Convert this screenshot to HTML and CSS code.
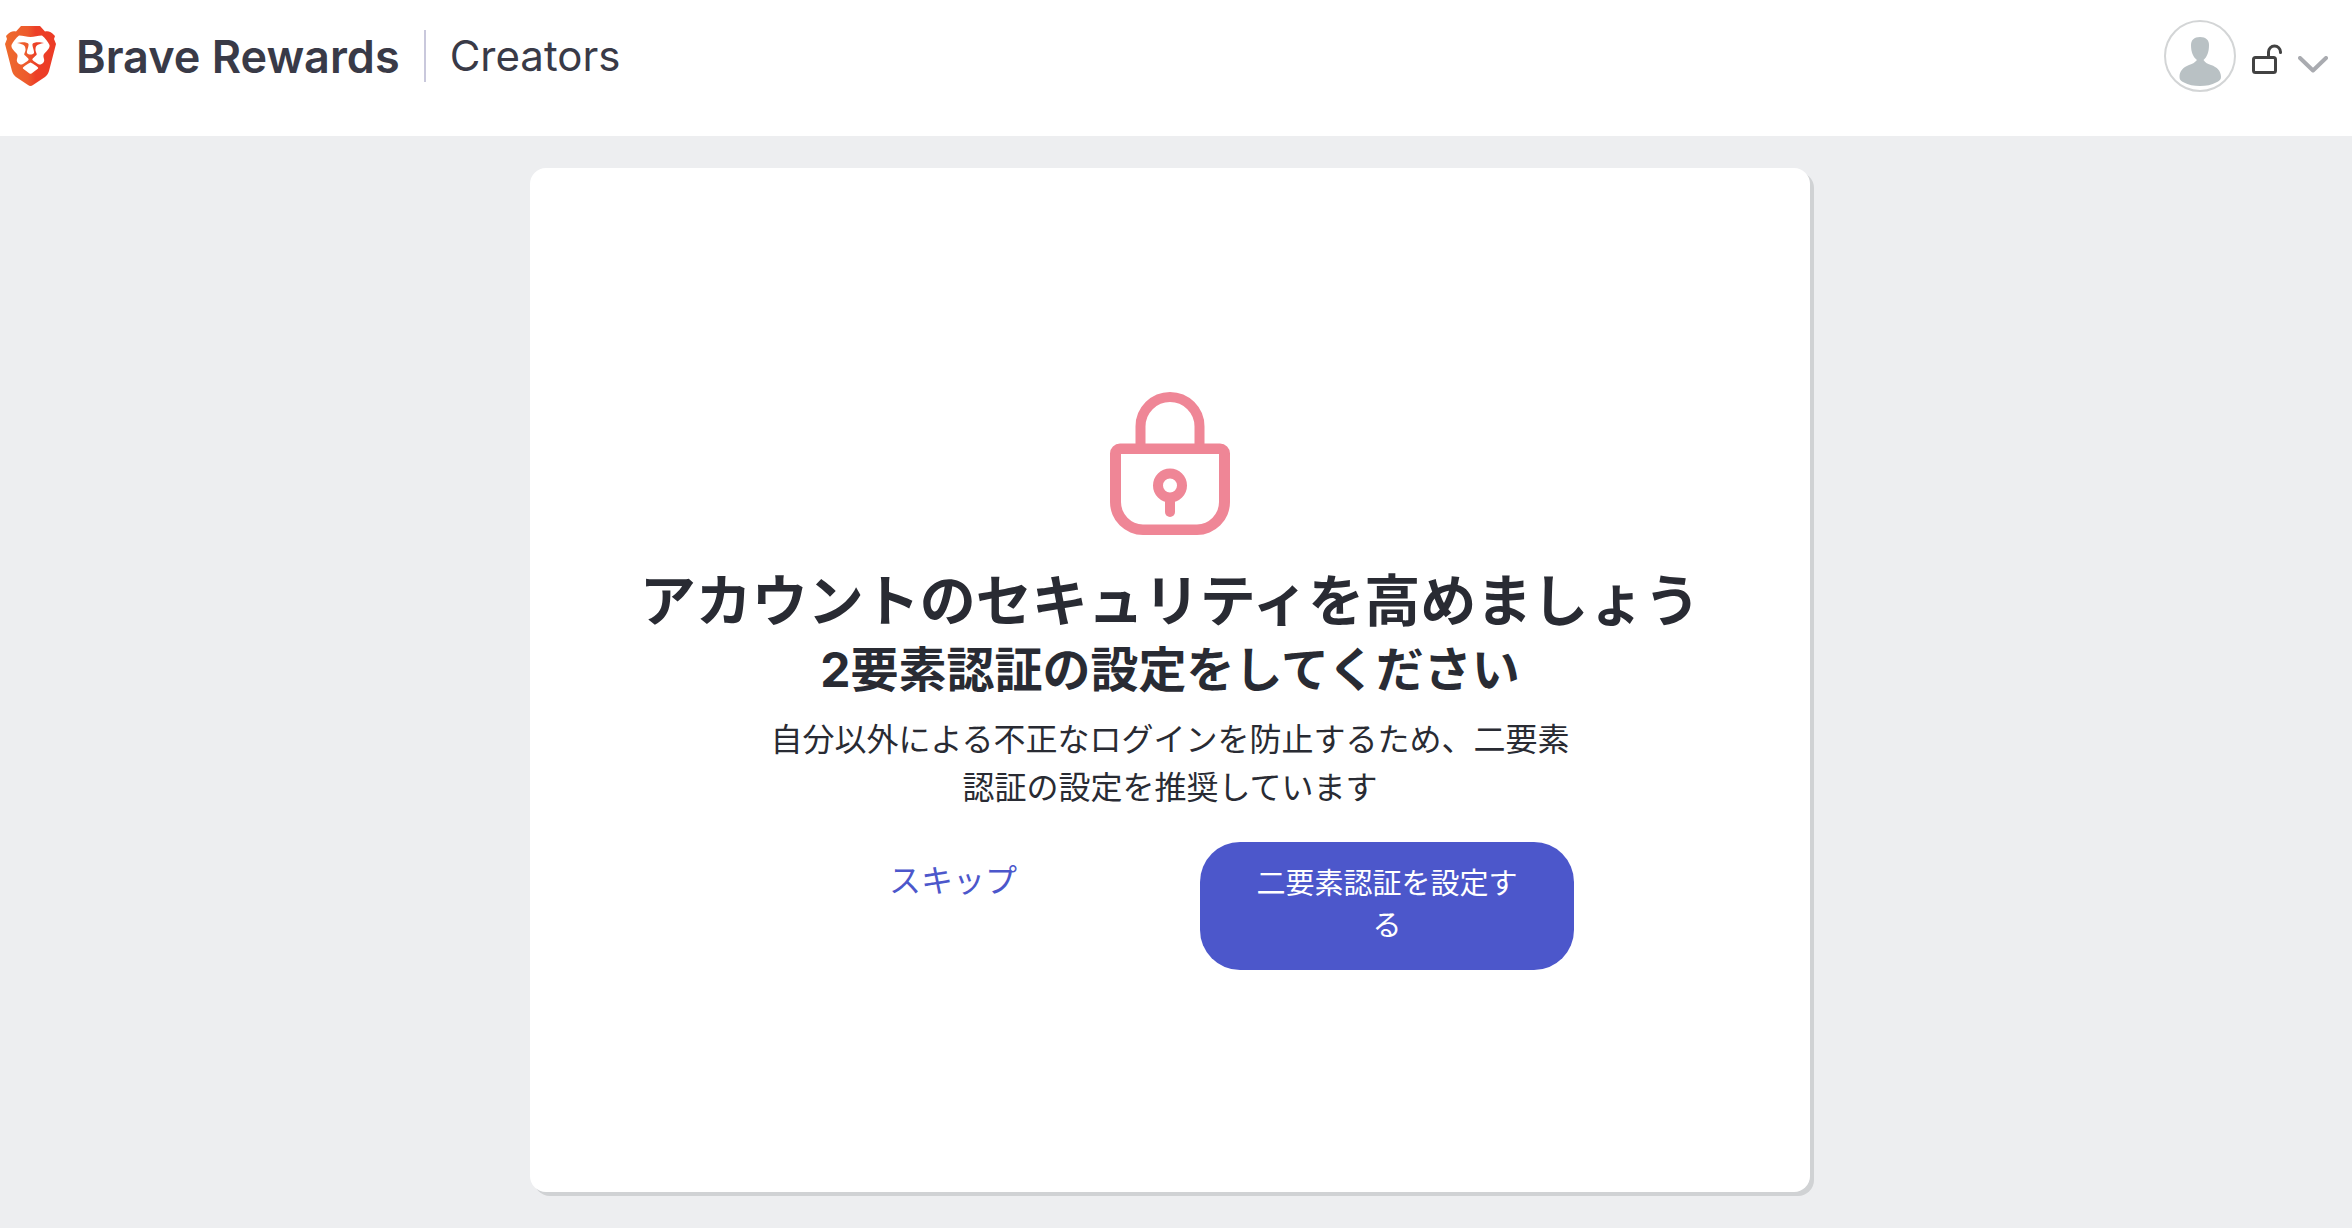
FILE: index.html
```
<!DOCTYPE html>
<html lang="ja">
<head>
    <meta charset="UTF-8">
    <meta name="viewport" content="width=device-width, initial-scale=1.0">
    <title>Brave Rewards Creators</title>
    <link rel="stylesheet" href="styles.css">
</head>
<body>

    <header class="navbar">
        <a class="brand" href="#">
            <svg class="brand-logo" viewBox="0 0 51 60" aria-hidden="true">
                <defs>
                    <linearGradient id="flame" x1="0" y1="0" x2="1" y2="0">
                        <stop offset="0" stop-color="#ee6b2d"/>
                        <stop offset="0.45" stop-color="#ed5a2d"/>
                        <stop offset="0.6" stop-color="#ec3f27"/>
                        <stop offset="1" stop-color="#ec3b26"/>
                    </linearGradient>
                </defs>
                <path fill="url(#flame)" d="M16 0H35L40 5.500C43 4.600 46 5.500 50 10L49 13L51 18L44 45C43 48 42 49.500 40 51L28 59Q25.500 61 23 59L11 51C9 49.500 8 48 7 45L0 18L2 13L1 10C5 5.500 8 4.600 11 5.500Z"/>
                <path fill="#fff" d="M25.500 11C29 11 33 9.500 37 9.500C40 12 43 15.500 44.500 19C45 21.500 43 24 39 28C38 29.500 38.500 31 39 33C40 36 37 39 34 38.500C31.500 37 29 35.500 27.500 34C27 33 28 32 31.500 29C32.500 28 30 25.500 30.500 23C30.800 20 31 18.500 39 17C35 15.500 28 16 27.500 18C27 20 29.500 25 29 27C28.500 28 26.500 28.500 25.500 28.500C24.500 28.500 22.500 28 22 27C21.500 25 24 20 23.500 18C23 16 16 15.500 12 17C20 18.500 20.200 20 20.500 23C21 25.500 18.500 28 19.500 29C23 32 24 33 23.500 34C22 35.500 19.500 37 17 38.500C14 39 11 36 12 33C12.500 31 13 29.500 12 28C8 24 6 21.500 6.500 19C8 15.500 11 12 14 9.500C18 9.500 22 11 25.500 11Z"/>
                <path fill="#fff" d="M25.500 36.500C28 37.500 31 39.500 33 41.500C33.500 42 33 42.500 32.500 43L26.500 47.500Q25.500 48 24.500 47.500L18.500 43C18 42.500 17.500 42 18 41.500C20 39.500 23 37.500 25.500 36.500Z"/>
            </svg>
            <span class="brand-name">Brave Rewards</span>
            <span class="brand-section">Creators</span>
        </a>

        <button class="user-menu" type="button" aria-label="アカウント">
            <svg class="avatar" viewBox="0 0 72 72" aria-hidden="true">
                <circle cx="36" cy="36" r="35" fill="#fff" stroke="#d3d5d6" stroke-width="2"/>
                <path fill="#b9c1c4" d="M36 17C42 17 45 20 45 25C45 32 43 37 39.500 40C41 42 43 44 47 45C53 47 57 51 57 57C57 60 55 61 52 62.500C48 65 42 66 36 66C30 66 24 65 20 62.500C17 61 15.500 60 15.500 57C15.500 51 19 47.500 25 45C29 44 31 42 33 40C29 37 27 32 27 25C27 20 30 17 36 17Z"/>
            </svg>
            <svg class="unlock" viewBox="0 0 30 30" aria-hidden="true">
                <rect x="1.500" y="13.500" width="22" height="15" rx="2"/>
                <path d="M16.500 13V8A6 6 0 0 1 28.500 8V8.500"/>
            </svg>
            <svg class="chevron" viewBox="0 0 30 18" aria-hidden="true">
                <path d="M2 2L15 14.500L28 2"/>
            </svg>
        </button>
    </header>

    <main class="page">
        <section class="card">
            <svg class="lock" viewBox="0 0 120 144" aria-hidden="true">
                <path d="M30.500 57V34.500A29.500 29.500 0 0 1 89.500 34.500V57"/>
                <path fill="#ef8696" stroke="none" fill-rule="evenodd" d="M10 51.500H110A10 10 0 0 1 120 61.500V110A33 33 0 0 1 87 143H33A33 33 0 0 1 0 110V61.500A10 10 0 0 1 10 51.500ZM11 62V110A22.500 22.500 0 0 0 33 132.500H87A22.500 22.500 0 0 0 109 110V62Z"/>
                <circle cx="60" cy="93.500" r="12"/>
                <path stroke-linecap="round" d="M60 106V120"/>
            </svg>

            <h1>アカウントのセキュリティを高めましょう</h1>
            <h2>2要素認証の設定をしてください</h2>
            <p>自分以外による不正なログインを防止するため、二要素認証の設定を推奨しています</p>

            <div class="actions">
                <a class="skip" href="#">スキップ</a>
                <button class="setup" type="button">二要素認証を設定する</button>
            </div>
        </section>
    </main>

</body>
</html>
```
FILE: styles.css
```
* {
    box-sizing: border-box;
}
body {
    font-family: Inter, "Noto Sans CJK JP", sans-serif;
    background-color: #edeef0;
    color: #292b33;
    margin: 0;
    min-height: 100vh;
}
.navbar {
    display: flex;
    justify-content: space-between;
    align-items: flex-start;
    height: 136px;
    padding: 20px 24px 0 5px;
    background-color: #fff;
}
.brand {
    display: flex;
    align-items: center;
    height: 72px;
    color: #393a47;
    text-decoration: none;
    white-space: nowrap;
}
.brand-logo {
    width: 51px;
    height: 60px;
    margin-right: 20px;
}
.brand-name {
    font-size: 45px;
    font-weight: 600;
}
.brand-section {
    margin-left: 24px;
    padding-left: 24px;
    border-left: 2px solid #c9c8dc;
    font-size: 42px;
    line-height: 52px;
}
.user-menu {
    display: flex;
    align-items: center;
    padding: 0;
    border: none;
    background: none;
    cursor: pointer;
}
.avatar {
    width: 72px;
    height: 72px;
}
.unlock {
    width: 30px;
    height: 30px;
    margin: 6px 16px 0;
    fill: none;
    stroke: #424242;
    stroke-width: 3;
    stroke-linecap: round;
}
.chevron {
    width: 30px;
    height: 18px;
    margin-top: 18px;
    fill: none;
    stroke: #a9abb0;
    stroke-width: 4;
    stroke-linecap: round;
    stroke-linejoin: round;
}
.page {
    padding: 32px 12px 32px 0;
}
.card {
    display: flex;
    flex-direction: column;
    align-items: center;
    justify-content: center;
    max-width: 1280px;
    min-height: 1024px;
    margin: 0 auto;
    padding-top: 2px;
    background-color: #fff;
    border-radius: 16px;
    box-shadow: 4px 4px 0 #d0d2d4;
    text-align: center;
}
.lock {
    width: 120px;
    height: 144px;
    margin-bottom: 30px;
    fill: none;
    stroke: #ef8696;
    stroke-width: 10;
}
h1 {
    margin: 0;
    font-size: 56px;
    line-height: 70px;
}
h2 {
    margin: 0 0 12px;
    font-size: 48px;
    line-height: 68px;
}
p {
    max-width: 808px;
    margin: 0 0 30px;
    font-size: 32px;
    line-height: 48px;
}
.actions {
    display: grid;
    grid-template-columns: 1fr 1fr;
    align-items: start;
    gap: 60px;
    width: 100%;
    max-width: 808px;
}
.skip {
    padding: 15px 0;
    color: #4c57cb;
    font-size: 32px;
    line-height: 48px;
    text-decoration: none;
}
.setup {
    padding: 21px 48px 23px;
    border: none;
    border-radius: 40px;
    background-color: #4c57cb;
    color: #fff;
    font-family: inherit;
    font-size: 29px;
    line-height: 42px;
    cursor: pointer;
}
.setup:hover {
    background-color: #3f4abf;
}
```
